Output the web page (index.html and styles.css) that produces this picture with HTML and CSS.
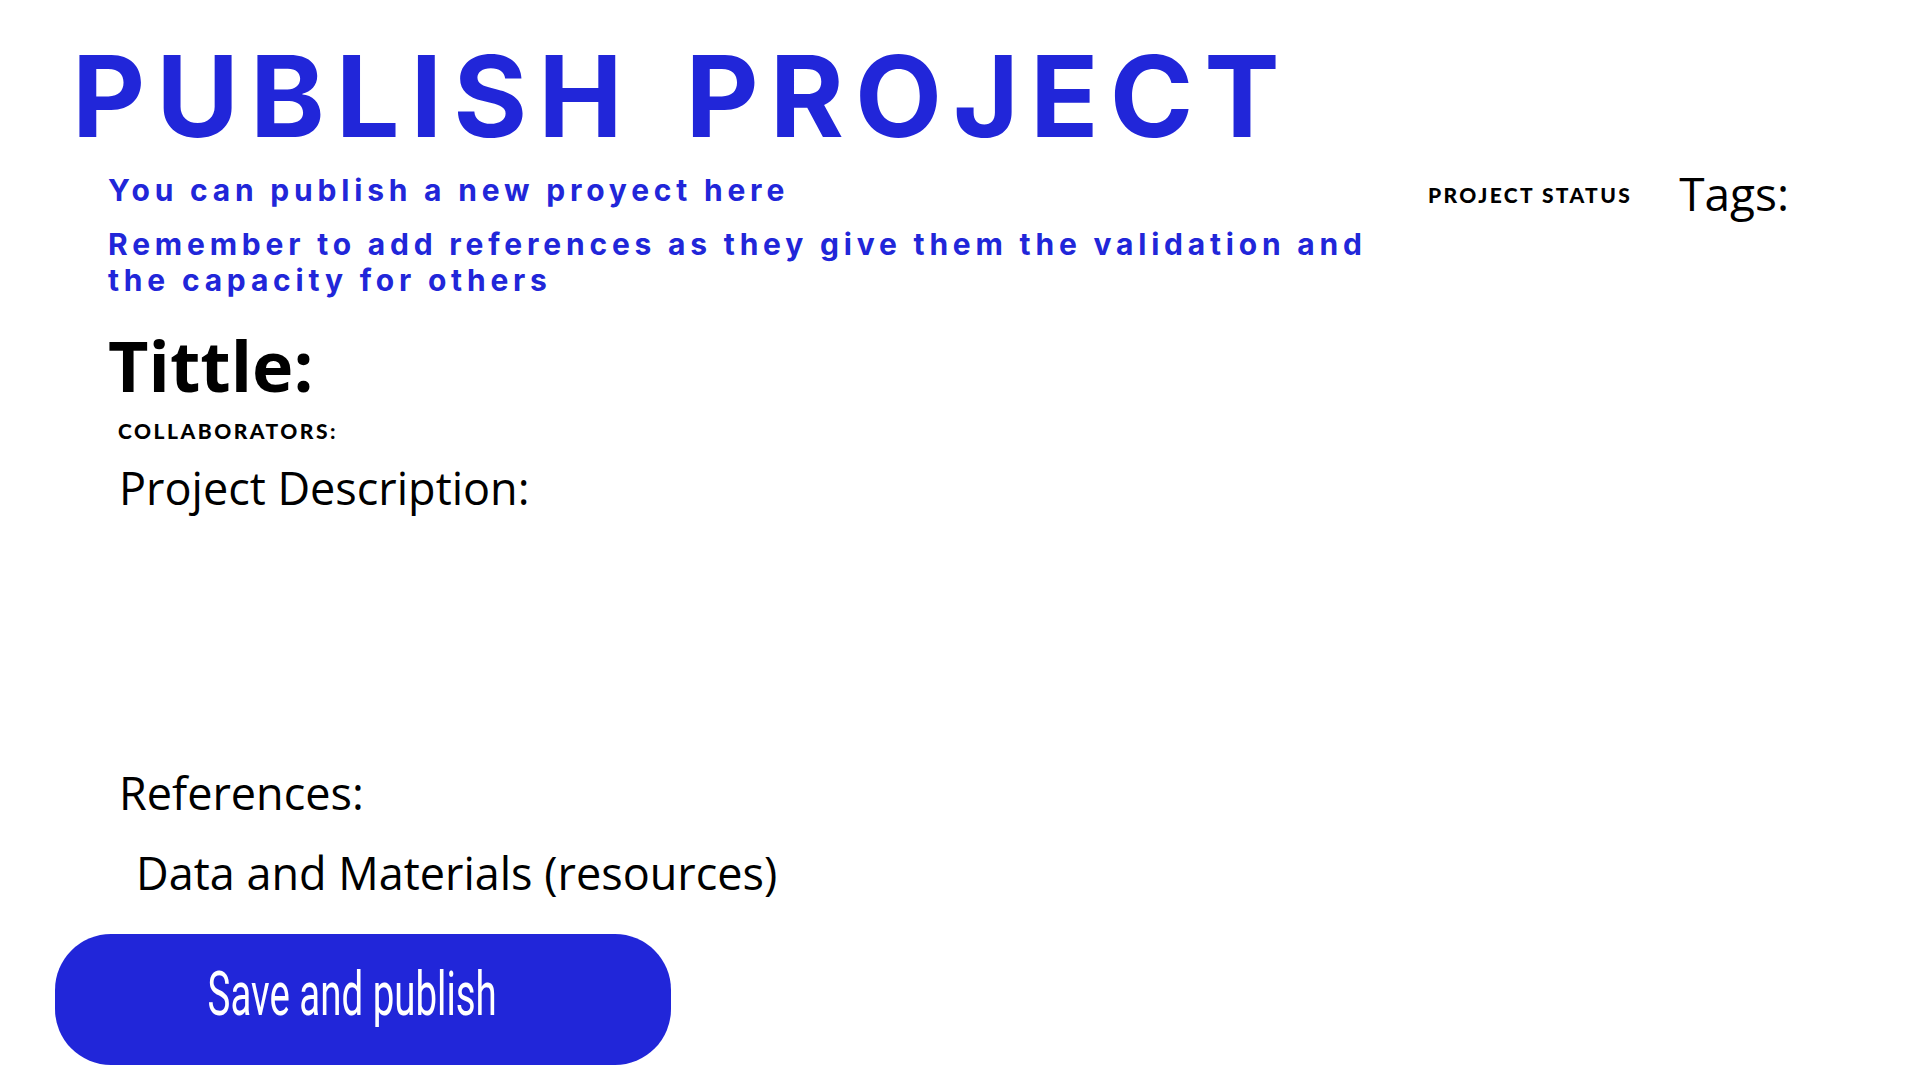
FILE: index.html
```html
<!DOCTYPE html>
<html lang="en">
<head>
<meta charset="utf-8">
<title>Publish Project</title>
<link rel="stylesheet" href="styles.css">
</head>
<body>
<div class="page">
  <h1 class="page-title">PUBLISH PROJECT</h1>
  <div class="main">
    <div class="left">
      <p class="intro intro-first">You can publish a new proyect here</p>
      <p class="intro intro-second">Remember to add references as they give them the validation and the capacity for others</p>
      <h2 class="field-title">Tittle:</h2>
      <div class="collaborators">COLLABORATORS:</div>
      <div class="description">Project Description:</div>
      <div class="references">References:</div>
      <div class="data">Data and Materials (resources)</div>
    </div>
    <div class="right">
      <div class="status">PROJECT STATUS</div>
      <div class="tags">Tags:</div>
    </div>
  </div>
  <button class="publish-btn" type="button"><span class="publish-label">Save and publish</span></button>
</div>
</body>
</html>
```
FILE: styles.css
```css
html, body {
  margin: 0;
  padding: 0;
  background: #ffffff;
}
.page {
  width: 1920px;
  height: 1080px;
  overflow: hidden;
  display: flex;
  flex-direction: column;
}
.page-title {
  margin: 40px 0 0 72px;
  font-family: Inter, "Liberation Sans", sans-serif;
  font-weight: 700;
  font-size: 113px;
  line-height: 113px;
  letter-spacing: 11px;
  word-spacing: 14px;
  color: #2126d9;
  white-space: nowrap;
}
.main {
  display: flex;
  align-items: flex-start;
}
.left {
  margin-left: 108px;
  width: 1290px;
  display: flex;
  flex-direction: column;
  padding-top: 19px;
}
.intro {
  margin: 0;
  font-family: Inter, "Liberation Sans", sans-serif;
  font-weight: 700;
  font-size: 30px;
  line-height: 36px;
  letter-spacing: 4.8px;
  color: #2126d9;
}
.intro-second {
  margin-top: 18px;
}
.field-title {
  margin: 32px 0 0 0;
  font-family: "Open Sans", sans-serif;
  font-weight: 700;
  font-size: 70px;
  line-height: 70px;
  color: #000;
}
.collaborators {
  margin-top: 21px;
  padding-left: 10px;
  font-family: Lato, "Liberation Sans", sans-serif;
  font-weight: 900;
  font-size: 21px;
  line-height: 20px;
  letter-spacing: 2.5px;
  color: #000;
}
.description,
.references,
.data {
  font-family: "Open Sans", sans-serif;
  font-weight: 400;
  font-size: 45px;
  line-height: 46px;
  color: #000;
}
.description {
  margin-top: 24px;
  padding-left: 11px;
  height: 305px;
}
.references {
  padding-left: 11px;
}
.data {
  margin-top: 34px;
  padding-left: 28px;
}
.right {
  display: flex;
  align-items: flex-start;
  gap: 47px;
  margin-left: 30px;
}
.status {
  margin-top: 32px;
  font-family: Lato, "Liberation Sans", sans-serif;
  font-weight: 900;
  font-size: 21px;
  line-height: 20px;
  letter-spacing: 2.4px;
  color: #000;
  white-space: nowrap;
}
.tags {
  margin-top: 17px;
  font-family: "Open Sans", sans-serif;
  font-size: 46px;
  line-height: 46px;
  color: #000;
}
.publish-btn {
  margin: 38px 0 0 55px;
  width: 616px;
  height: 131px;
  border: none;
  border-radius: 56px;
  background: #2126d9;
  color: #fff;
  padding: 0 22px 12px 0;
  display: flex;
  align-items: center;
  justify-content: center;
  cursor: pointer;
}
.publish-label {
  display: inline-block;
  font-family: Roboto, "Liberation Sans", sans-serif;
  font-weight: 400;
  font-size: 62px;
  line-height: 62px;
  transform: scaleX(0.62);
  white-space: nowrap;
}
```
